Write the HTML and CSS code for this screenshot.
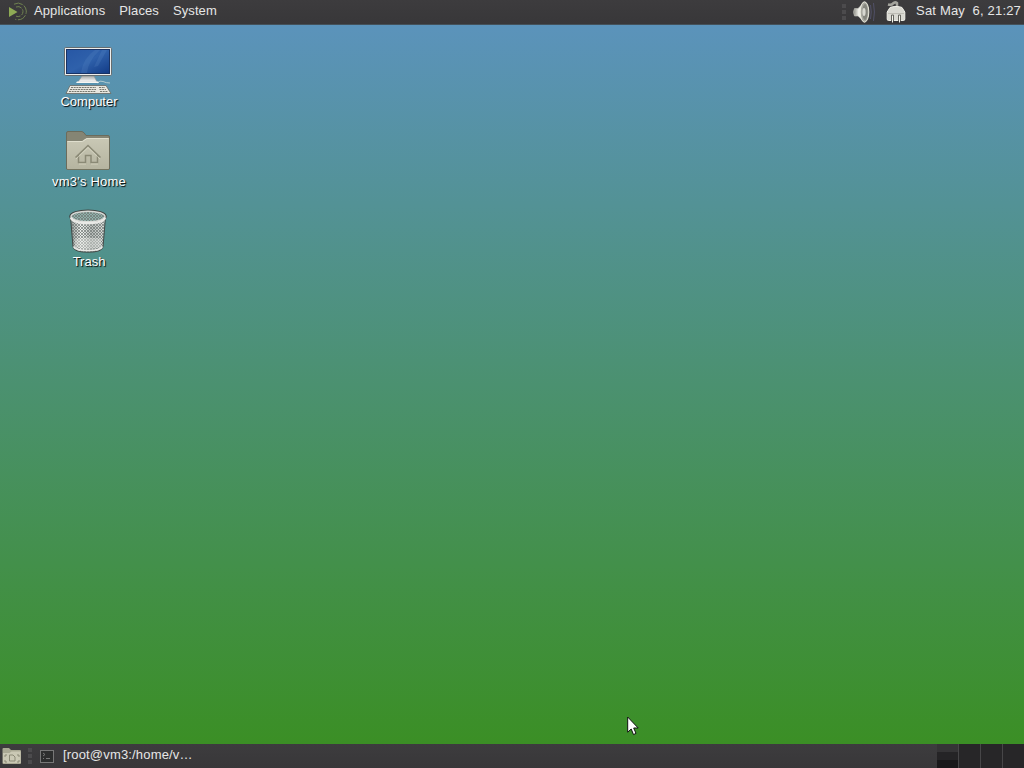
FILE: index.html
```
<!DOCTYPE html>
<html>
<head>
    <meta charset="utf-8">
    <title>Desktop</title>
    <link rel="stylesheet" href="styles.css">
</head>
<body>
    <div class="panel top-panel">
        <svg class="menu-logo" width="20" height="20" viewBox="0 0 20 20">
            <path d="M1 6L9.5 11L1 16Z" fill="#8fab55"/>
            <g fill="none" stroke="#6f8250" stroke-width="1">
                <path d="M6 3.2A8.3 8.3 0 1 1 7 18.2" stroke-dasharray="9 1.5"/>
                <path d="M8 6A5 5 0 1 1 8 15.2" stroke-dasharray="6 1.5"/>
            </g>
        </svg>
        <div class="menu">
            <span>Applications</span>
            <span>Places</span>
            <span>System</span>
        </div>
        <div class="tray">
            <div class="handle"></div>
            <svg class="volume" width="24" height="24" viewBox="0 0 24 24">
                <defs>
                    <linearGradient id="cone" x1="0" x2="1">
                        <stop offset="0" stop-color="#8b8b83"/>
                        <stop offset=".5" stop-color="#f5f5ef"/>
                        <stop offset="1" stop-color="#aaa9a1"/>
                    </linearGradient>
                </defs>
                <path d="M2.5 8.5H6L12.5 2V22L6 16H2.5Q.5 12 2.5 8.5Z" fill="url(#cone)" stroke="#c5c5bd" stroke-width=".6"/>
                <ellipse cx="12.5" cy="12" rx="4.3" ry="10.2" fill="#a9a9a0" stroke="#ededdf"/>
                <ellipse cx="13" cy="12" rx="2.6" ry="8" fill="#85867d"/>
                <ellipse cx="12" cy="12" rx="1.6" ry="4" fill="#d8d8d0"/>
                <path d="M18.5 5Q20 12 18.5 19M21.5 3Q23.3 12 21.5 21" fill="none" stroke="#515168"/>
            </svg>
            <svg class="network" width="20" height="24" viewBox="0 0 20 24">
                <path d="M2 4.5Q5.5 5.5 7 3.5Q9 1.5 11 3V7" fill="none" stroke="#a5a59e" stroke-width="2.5"/>
                <path d="M4 7.5Q6 6.5 10 6.5Q14 6.5 16 7.5L18.8 12V19Q18.8 20.5 17.5 20.5H2.5Q1.2 20.5 1.2 19V12Z" fill="#d9d9d2" stroke="#f0f0e9"/>
                <path d="M2 13.5H18" stroke="#bdbcb4"/>
                <path d="M5.5 21V15H7.5V21M12.5 21V15H14.5V21" fill="none" stroke="#66665f"/>
                <path d="M6.5 16V22.5M13.5 16V22.5" stroke="#f4f4ed"/>
            </svg>
            <span class="clock">Sat May&nbsp; 6, 21:27</span>
        </div>
    </div>

    <div class="desktop">
        <div class="launcher">
            <svg width="48" height="48" viewBox="0 0 48 48">
                <defs>
                    <linearGradient id="screen" x2="1" y2="1">
                        <stop offset="0" stop-color="#2757a5"/>
                        <stop offset=".5" stop-color="#2f61ab"/>
                        <stop offset="1" stop-color="#123b86"/>
                    </linearGradient>
                    <linearGradient id="stand" x2="0" y2="1">
                        <stop offset="0" stop-color="#a5a8a8"/>
                        <stop offset="1" stop-color="#ffffff"/>
                    </linearGradient>
                </defs>
                <path d="M33 36Q36 33 39 34.5T46 36" fill="none" stroke="#b3cbd0"/>
                <path d="M18 29H30L33 35H14Z" fill="url(#stand)" stroke="#8b9192" stroke-width=".6"/>
                <path d="M13 34.5H34L35 36H12Z" fill="#f6f6f3"/>
                <rect x=".5" y=".5" width="47" height="28" rx="1.2" fill="#eeeeec" stroke="#656d70"/>
                <rect x="2.5" y="2.5" width="43" height="24" fill="url(#screen)" stroke="#183263"/>
                <path d="M17 26Q19 11 31 3H36Q24 14 23 26ZM30 20L38 3H43L34 19Z" fill="#618dc8" opacity=".22"/>
                <path d="M6 38.5H42L47 46.5H2Z" fill="#e7e6df" stroke="#666a65" stroke-width=".8"/>
                <path d="M7 40.5H32M6 42.5H32M5 44.5H32M35 40.5H41M35.5 42.5H42M36 44.5H44" stroke="#777970" stroke-dasharray="2 .7"/>
            </svg>
            <span class="label">Computer</span>
        </div>
        <div class="launcher">
            <svg width="48" height="48" viewBox="0 0 48 48">
                <defs>
                    <linearGradient id="folder" x2="0" y2="1">
                        <stop offset="0" stop-color="#c9c8b5"/>
                        <stop offset="1" stop-color="#b5b4a0"/>
                    </linearGradient>
                </defs>
                <path d="M2.5 42V6Q2.5 4.5 4 4.5H18Q20 5 22 8.5H44Q45.5 8.5 45.5 10V42Z" fill="#858574" stroke="#6b6c5c"/>
                <path d="M3 14H18L22.5 11H45V41Q45 42.5 43.5 42.5H4.5Q3 42.5 3 41Z" fill="url(#folder)"/>
                <path d="M3.5 14.5H18.5L23 11.5H44.5" fill="none" stroke="#e0dfce"/>
                <path d="M3 42.5H45" stroke="#74735f"/>
                <path d="M11.5 30.5L24 18.5L36.5 30.5M14.5 28.5V35.5H21.5V28.5H27V35.5H33.5V28.5" fill="none" stroke="#8a8975" stroke-width="1.5"/>
                <path d="M12 32L24 20.5L36 32M15 37H22M27 37H34" fill="none" stroke="#e2e0ce" stroke-width=".6"/>
            </svg>
            <span class="label wide">vm3's Home</span>
        </div>
        <div class="launcher">
            <svg width="48" height="48" viewBox="0 0 48 48">
                <defs>
                    <linearGradient id="bin" x2="1">
                        <stop offset="0" stop-color="#959b98"/>
                        <stop offset=".3" stop-color="#f0f3f0"/>
                        <stop offset=".6" stop-color="#b5bab7"/>
                        <stop offset="1" stop-color="#d9ddda"/>
                    </linearGradient>
                    <pattern id="mesh" width="3" height="3" patternUnits="userSpaceOnUse">
                        <path d="M0 0L3 3M3 0L0 3" stroke="#6e7672" stroke-width=".7"/>
                    </pattern>
                </defs>
                <path d="M7 11L9 40Q10 45 24 45Q38 45 39 40L41 11Z" fill="url(#bin)"/>
                <path d="M7 11L9 40Q10 45 24 45Q38 45 39 40L41 11Z" fill="url(#mesh)"/>
                <path d="M11 32Q24 29 37 32V40Q24 44 11 40Z" fill="#e6e8e5" opacity=".45"/>
                <path d="M6.5 10L9 40Q10 45.2 24 45.2Q38 45.2 39 40L41.5 10" fill="none" stroke="#434947"/>
                <path d="M9.5 39.5Q11 43.5 24 43.5Q37 43.5 38.5 39.5" fill="none" stroke="#e8e8e5" stroke-width="1.6"/>
                <ellipse cx="24" cy="9.5" rx="17.8" ry="6" fill="#8fb0aa" stroke="#414745" stroke-width="2"/>
                <ellipse cx="24" cy="9.5" rx="17" ry="5.3" fill="url(#mesh)" stroke="#d7d9d5" stroke-width="1.4"/>
                <path d="M7 10.5Q8 16 24 16Q40 16 41 10.5" fill="none" stroke="#e9e9e6" stroke-width="2.4"/>
            </svg>
            <span class="label">Trash</span>
        </div>
        <svg class="pointer" width="12" height="20" viewBox="0 0 12 20">
            <path d="M.7 1V16.2L4.2 13L6.5 18.6L9 17.4L6.7 12H11.2Z" fill="#fff" stroke="#111"/>
        </svg>
    </div>

    <div class="panel bottom-panel">
        <svg class="show-desktop" width="20" height="20" viewBox="0 0 20 20">
            <path d="M.5 17V3Q.5 2 1.5 2H7L9 4H18Q19 4 19 5V17Q19 18 18 18H1.5Q.5 18 .5 17Z" fill="#aaa994"/>
            <path d="M1 7H7.5L9.5 5.5H18.5V17H1Z" fill="#cac8b4"/>
            <path d="M7.5 9H11L13 11V15H7.5ZM3 9H5M3 9V11M15 9H17V11M3 14V16H5M15 16H17V14" fill="none" stroke="#8b8a76"/>
        </svg>
        <div class="handle"></div>
        <div class="task">
            <svg width="14" height="14" viewBox="0 0 14 14">
                <rect x=".5" y=".5" width="13" height="12" fill="#2d2e2e" stroke="#777"/>
                <path d="M3 3L5 4.5L3 6M3 8.5H4M6 8.5H10" fill="none" stroke="#777"/>
            </svg>
            <span>[root@vm3:/home/v…</span>
        </div>
        <div class="workspaces">
            <div class="workspace active"><div class="mini-window"></div></div>
            <div class="workspace"></div>
            <div class="workspace"></div>
            <div class="workspace"></div>
        </div>
    </div>
</body>
</html>
```

FILE: styles.css
```
* {
    box-sizing: border-box;
}

body {
    margin: 0;
    height: 100vh;
    display: flex;
    flex-direction: column;
    overflow: hidden;
    font-family: "Liberation Sans", Arial, sans-serif;
    font-size: 13px;
    line-height: 16px;
    color: #e6e6e6;
    cursor: default;
}

svg {
    display: block;
    flex: none;
}

.panel {
    display: flex;
    flex: none;
    background: linear-gradient(#3d3c3e, #383739);
}

.top-panel {
    height: 25px;
    padding: 0 3px 0 8px;
    border-bottom: 1px solid #44515a;
}

.menu-logo {
    margin-top: 1px;
}

.menu {
    display: flex;
    gap: 14px;
    padding: 3px 0 0 6px;
    letter-spacing: 0.1px;
}

.tray {
    display: flex;
    margin-left: auto;
}

.handle {
    width: 4px;
    height: 16px;
    margin-top: 4px;
    background: repeating-linear-gradient(#4c4b4d 0 4px, transparent 4px 6px);
}

.volume {
    margin-left: 6px;
}

.network {
    margin-left: 10px;
}

.clock {
    padding-top: 3px;
    margin-left: 10px;
    letter-spacing: 0.18px;
}

.desktop {
    flex: 1;
    position: relative;
    padding: 22px 0 0 28px;
    background: linear-gradient(#5b93bb, #3b8f25);
}

.launcher {
    width: 120px;
    height: 80px;
    display: flex;
    flex-direction: column;
    align-items: center;
}

.label {
    margin: -1px 0 0 2px;
    color: #fff;
    text-shadow: 1px 1px 1px #000;
}

.label.wide {
    letter-spacing: 0.2px;
}

.pointer {
    position: absolute;
    left: 627px;
    top: 691px;
}

.bottom-panel {
    height: 24px;
    padding-left: 2px;
}

.show-desktop {
    margin-top: 2px;
}

.bottom-panel .handle {
    margin-left: 6px;
}

.task {
    display: flex;
    gap: 9px;
    margin-left: 8px;
    padding-top: 3px;
    letter-spacing: 0.17px;
}

.task svg {
    margin-top: 3px;
}

.workspaces {
    display: flex;
    gap: 1px;
    width: 87px;
    margin-left: auto;
    background: #474648;
}

.workspace {
    flex: 1;
    background: #272628;
}

.workspace.active {
    display: flex;
    align-items: flex-end;
    background: #353436;
}

.mini-window {
    width: 21px;
    height: 16px;
    background: linear-gradient(#252426 50%, #19181a 50%);
}
```
